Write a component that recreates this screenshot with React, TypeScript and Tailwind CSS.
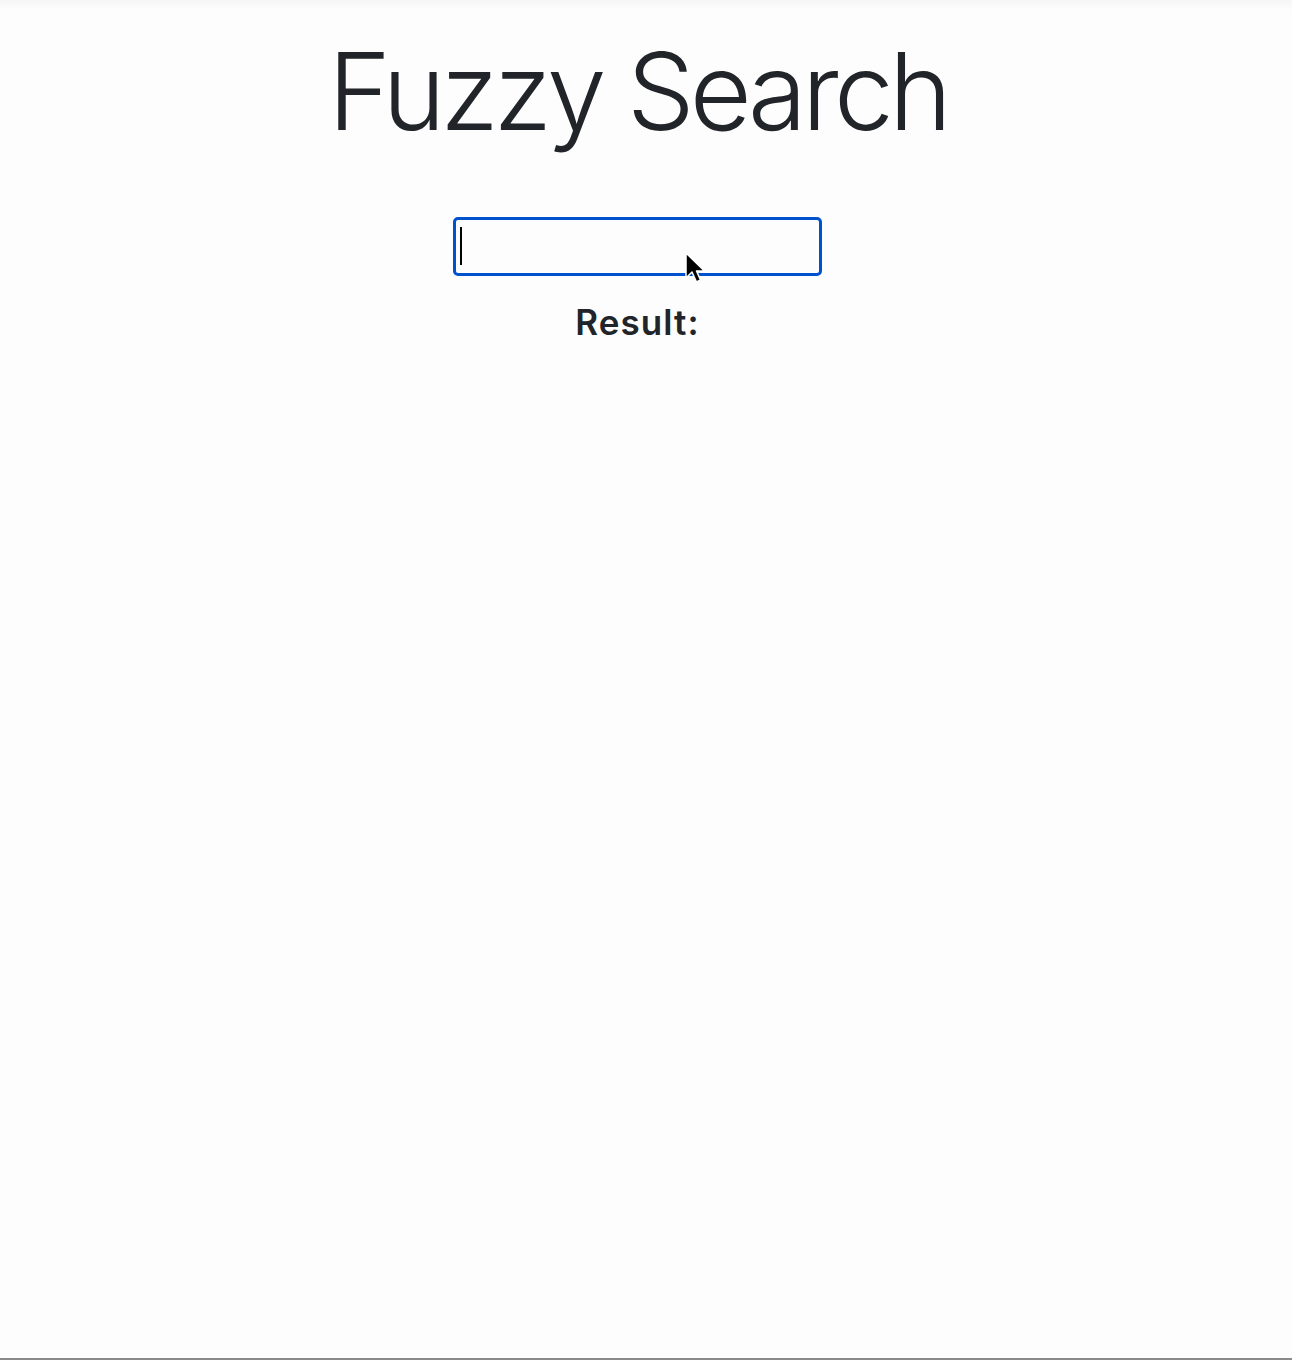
export default function App() {
  return (
    <main className="relative min-h-[1360px] bg-[#fdfdfd] font-['Inter','Noto_Sans',sans-serif] text-[#212529]">
      <div className="h-[10px] bg-gradient-to-b from-[#f6f6f6] to-[#fdfdfd]" />
      <div className="flex flex-col items-center pr-[17px]">
        <h1 className="mt-[28px] text-[107px] font-light leading-none tracking-[-0.045em]">Fuzzy Search</h1>
        <div className="relative mt-[72px]">
          <input
            type="text"
            className="h-[59px] w-[369px] rounded-[5px] border-[3px] border-[#0052cc] bg-[#fdfdfd] px-[5px] text-[30px] outline-none"
          />
          {/* text caret */}
          <div className="pointer-events-none absolute left-[7px] top-[10px] h-[38px] w-[2px] bg-black" />
          {/* mouse pointer */}
          <svg className="pointer-events-none absolute left-[231px] top-[34px]" width="22" height="34" viewBox="0 0 22 34">
            <path d="M2 2 L2 27 L8 21 L12.5 31 L16.5 29 L12.5 20 L20.5 20 Z" fill="#000" stroke="#fff" strokeWidth="1.5" strokeLinejoin="round" />
          </svg>
        </div>
        <h5 className="mt-[29px] text-[35px] font-semibold leading-none tracking-[0.03em]">Result:</h5>
      </div>
      <div className="absolute bottom-0 left-0 right-0 h-[2px] bg-[#8a8a8a]" />
    </main>
  );
}
